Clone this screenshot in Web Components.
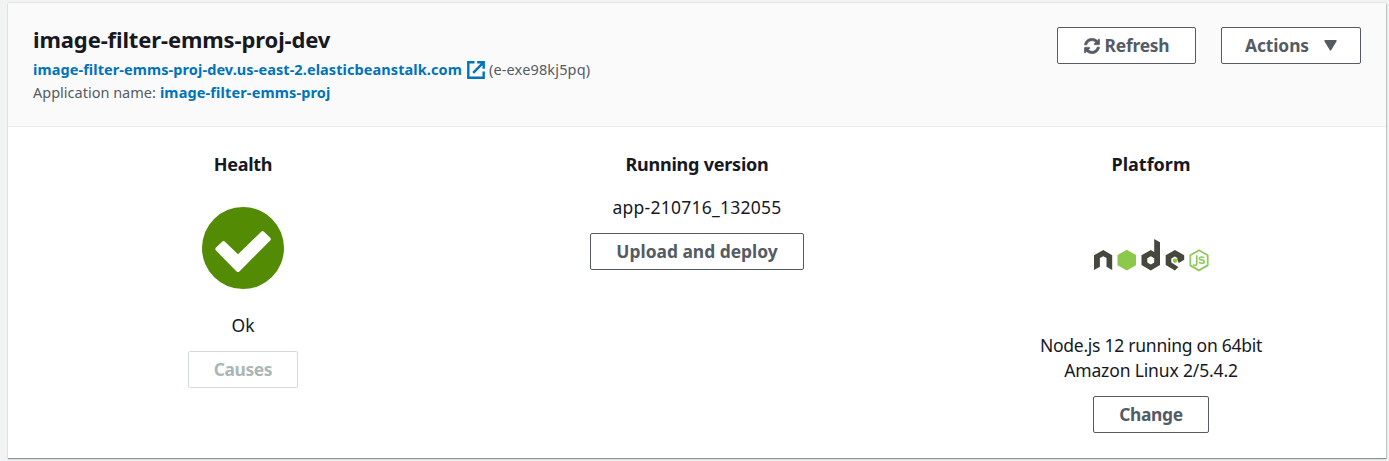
<!DOCTYPE html>
<html lang="en">
<head>
<meta charset="utf-8">
<title>Environment overview</title>
<style>
html,body{margin:0;height:461px;overflow:hidden;background:#f2f3f3;font-family:"Noto Sans","Open Sans",sans-serif;color:#16191f}
</style>
</head>
<body>
<env-overview></env-overview>
<script>
function define(name, markup) {
  const template = document.createElement('template');
  template.innerHTML = markup;
  customElements.define(name, class extends HTMLElement {
    constructor() {
      super();
      this.attachShadow({mode: 'open'}).append(template.content.cloneNode(true));
    }
  });
}

define('icon-external', `<style>:host{display:block;width:18px;height:18px}svg{display:block}</style>
<svg width="18" height="18" viewBox="0 0 18 18" fill="none" stroke="#0073bb" stroke-width="2.4"><path d="M7.5 1.3H1.3v15.4h15.4v-6.2M10.2 1.3h6.5v6.5M16.3 1.7 6.2 11.8"/></svg>`);

define('icon-refresh', `<style>:host{display:block;width:16px;height:16px}svg{display:block}</style>
<svg width="16" height="16" viewBox="0 0 512 512" fill="#545b64" stroke="#545b64" stroke-width="16"><path d="M370.72 133.28C339.458 104.008 298.888 87.962 255.848 88c-77.458.068-144.328 53.178-162.791 126.85-1.344 5.363-6.122 9.15-11.651 9.15H24.103c-7.498 0-13.194-6.807-11.807-14.176C33.933 94.924 134.813 8 256 8c66.448 0 126.791 26.136 171.315 68.685L463.03 40.97C478.149 25.851 504 36.559 504 57.941V192c0 13.255-10.745 24-24 24H345.941c-21.382 0-32.09-25.851-16.971-40.971l41.75-41.749zM32 296h134.059c21.382 0 32.09 25.851 16.971 40.971l-41.75 41.75c31.262 29.273 71.835 45.319 114.876 45.28 77.418-.07 144.315-53.144 162.787-126.849 1.344-5.363 6.122-9.15 11.651-9.15h57.304c7.498 0 13.194 6.807 11.807 14.176C478.067 417.076 377.187 504 256 504c-66.448 0-126.791-26.136-171.315-68.685L48.97 471.03C33.851 486.149 8 475.441 8 454.059V320c0-13.255 10.745-24 24-24z"/></svg>`);

define('icon-caret', `<style>:host{display:block}svg{display:block}</style>
<svg width="13" height="11" viewBox="0 0 13 11"><path d="M1 .8h11L6.5 10z" fill="#545b64" stroke="#545b64" stroke-width="1.4" stroke-linejoin="round"/></svg>`);

define('icon-ok', `<style>:host{display:block;width:82px;height:82px}svg{display:block}</style>
<svg width="82" height="82" viewBox="0 0 82 82"><circle cx="41" cy="41" r="41" fill="#548b04"/><path d="M14 40.6 20.2 34.7Q21.6 33.5 23 34.8L36 47.3 59.2 24.7Q60.6 23.4 62 24.7L68.2 30.8Q69.5 32.2 68.2 33.6L37.4 64.4Q36 65.8 34.6 64.4L14 43.6Q12.6 42 14 40.6z" fill="#fff"/></svg>`);

define('node-logo', `<style>:host{display:block;width:116px;height:36px}svg{display:block}</style>
<svg width="116" height="36" viewBox="0 0 116 36">
<g fill="#46483e" fill-rule="evenodd"><path d="M1 32V17.3L10.3 12l8.9 5.3V32l-5.7-3.3V20.1l-3.2-1.9-3.4 1.9v8.6z"/>
<path d="M61.2 1 67 4.3V27l-9.2 5.5-9.3-5.5V17.3l9.3-5.4 3.4 2zM57.8 18.3l-3.5 2v4.1l3.5 2 3.4-2v-4.1z"/>
<path d="M82 11.9 91.2 17.3v4.5l-5.5 3.1-1.4-3.4V20l-2.4-1.5-3.6 2v4.1l3.6 2.1 3.5 2.2L82 32.5l-9.3-5.5V17.3z"/></g>
<path d="M33.8 11.8 43 17.1V27.3l-9.2 5.3-9.3-5.3V17.1z" fill="#8cc84b"/>
<path d="m82 20.3 2 1.2v2.3l-2 1.2-2-1.2v-2.3z" fill="#83cd29"/>
<g fill="none" stroke="#8dcc5a" stroke-width="1.8"><path d="m106 12.2 8.7 5v10.2l-8.7 5-8.7-5V17.2z"/><path d="M103.8 17.2v8.5c0 1.8-1.5 2.2-3.5 1.1M111 20c-1.2-1.4-4.7-1.2-4.7.4 0 2.2 5 .7 5 3.3 0 2-4.1 2-5.2.3" stroke-width="1.6"/></g></svg>`);

define('app-button', `<style>
:host{display:block;width:var(--w);height:37px}
button{box-sizing:border-box;width:100%;height:100%;margin:0;padding:0;display:flex;align-items:center;justify-content:center;gap:5px;border:1px solid #545b64;border-radius:2px;background:#fff;color:#545b64;font:700 17.4px/25px "Noto Sans",sans-serif;letter-spacing:var(--ls,0)}
:host([disabled]) button{border-color:#d5dbdb;color:#aab7b8}
</style><button><slot></slot></button>`);

define('env-header', `<style>
:host{box-sizing:border-box;display:flex;justify-content:space-between;height:124px;padding:24px 25px 0;background:#fafafa;border-bottom:1px solid #eaeded;white-space:nowrap}
h1{margin:-2px 0 1px;font-size:22px;line-height:28px;height:32px;letter-spacing:-.12px}
.row{display:flex;align-items:center;height:23px;font-size:14.5px;line-height:23px;color:#545b64}
a{font-weight:700;color:#0073bb;letter-spacing:.085px}
.name{letter-spacing:.14px}
.id{letter-spacing:.15px}
icon-external{margin:0 4px 0 5px}
.app{margin-right:4px}
.actions{display:flex;gap:25px}
icon-caret{margin-left:10px}
</style>
<div><h1>image-filter-emms-proj-dev</h1>
<div class="row"><a>image-filter-emms-proj-dev.us-east-2.elasticbeanstalk.com</a><icon-external></icon-external><span class="id">(e-exe98kj5pq)</span></div>
<div class="row"><span class="app">Application name:</span><a class="name">image-filter-emms-proj</a></div></div>
<div class="actions"><app-button style="--w:139px;--ls:-.22px"><icon-refresh></icon-refresh><span>Refresh</span></app-button><app-button style="--w:140px;--ls:-.1px"><span>Actions</span><icon-caret></icon-caret></app-button></div>`);

define('status-column', `<style>
:host{display:flex;flex-direction:column;align-items:center;min-width:0}
h2{margin:0 0 17px;font-size:18px;line-height:28px;letter-spacing:var(--hs,0)}
</style><h2><slot name="title"></slot></h2><slot></slot>`);

define('text-line', `<style>:host{display:block;font-size:17.5px;line-height:25px;white-space:nowrap}</style><slot></slot>`);

define('env-overview', `<style>
:host{box-sizing:border-box;display:block;padding:3px 3px 3px 8px;height:461px}
section{height:455px;background:#fff;box-shadow:0 1px 1px 0 #879596,1px 1px 1px 0 #c6cdcd,0 -1px 1px #e4e8e8}
.cols{display:grid;grid-template-columns:repeat(3,454px);padding:23px 8px 0}
icon-ok{margin:12px 0 24px}
.ok{margin-bottom:13px}
.ver{margin-bottom:13px;letter-spacing:.25px}
node-logo{margin:43px 0 59px}
.plat{letter-spacing:-.26px}
.last{margin-bottom:13px;letter-spacing:-.15px}
</style>
<section><env-header></env-header>
<div class="cols">
<status-column style="--hs:-.3px"><span slot="title">Health</span><icon-ok></icon-ok><text-line class="ok">Ok</text-line><app-button disabled style="--w:110px;--ls:-.4px"><span>Causes</span></app-button></status-column>
<status-column style="--hs:-.22px"><span slot="title">Running version</span><text-line class="ver">app-210716_132055</text-line><app-button style="--w:214px"><span>Upload and deploy</span></app-button></status-column>
<status-column><span slot="title">Platform</span><node-logo></node-logo><text-line class="plat">Node.js 12 running on 64bit</text-line><text-line class="last">Amazon Linux 2/5.4.2</text-line><app-button style="--w:116px;--ls:-.35px"><span>Change</span></app-button></status-column>
</div></section>`);
</script>
</body>
</html>
